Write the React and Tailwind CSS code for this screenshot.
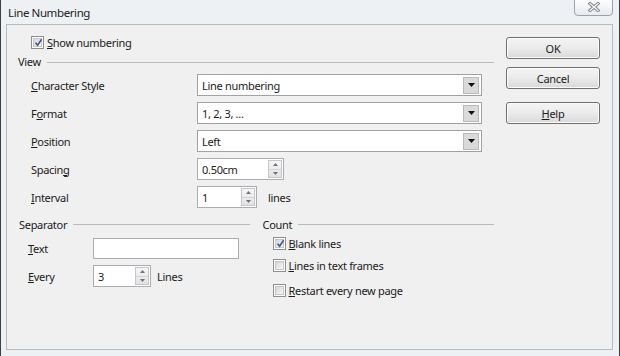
import React from 'react'

function Check({ checked }) {
  return (
    <span className="relative w-[13px] h-[13px] shrink-0 border border-[#8e8f8f] bg-white p-px flex">
      <span className="flex-1 border border-[#c6c6c6] bg-gradient-to-br from-[#d6d6d6] to-[#f7f7f7]" />
      {checked && (
        <svg className="absolute left-[2px] top-[1px]" width="9" height="9" viewBox="0 0 9 9">
          <path d="M1.5 4.8 L3.6 7.2 L7.6 1.2" fill="none" stroke="#3f5a93" strokeWidth="1.7" />
        </svg>
      )}
    </span>
  )
}

function Spinner() {
  return (
    <span className="w-[14px] h-[18px] shrink-0 border border-[#c4c6c9] bg-gradient-to-b from-[#f6f6f6] to-[#e2e2e2] flex flex-col">
      <span className="flex-1 flex items-center justify-center border-b border-[#d4d4d4]">
        <svg width="5" height="3" viewBox="0 0 5 3"><path d="M0 3 L2.5 0 L5 3 Z" fill="#6f7378" /></svg>
      </span>
      <span className="flex-1 flex items-center justify-center">
        <svg width="5" height="3" viewBox="0 0 5 3"><path d="M0 0 L2.5 3 L5 0 Z" fill="#6f7378" /></svg>
      </span>
    </span>
  )
}

function SpinBox({ value, className }) {
  return (
    <div className={`h-[22px] bg-white border border-[#abadb3] flex items-center pl-[4px] pr-px ${className}`}>
      <span className="flex-1">{value}</span>
      <Spinner />
    </div>
  )
}

function Select({ value }) {
  return (
    <div className="w-[285px] h-[22px] bg-white border border-[#a2a2a2] flex items-center pl-[4px] pr-[2px]">
      <span className="flex-1">{value}</span>
      <span className="w-[16px] h-[17px] bg-[#dadada] border border-[#b9b9b9] flex items-center justify-center">
        <svg width="7" height="4" viewBox="0 0 7 4"><path d="M0 0 L7 0 L3.5 4 Z" fill="#111" /></svg>
      </span>
    </div>
  )
}

function GroupTitle({ children, className }) {
  return (
    <div className={`flex items-center ${className}`}>
      <span>{children}</span>
      <span className="flex-1 h-px bg-[#b9bcbf] ml-[6px] mt-px" />
    </div>
  )
}

function Button({ children, className }) {
  return (
    <button className={`w-[94px] h-[22px] rounded-[3px] border border-[#707070] bg-gradient-to-b from-[#f4f4f4] via-[#ebebeb] to-[#d9d9d9] shadow-[inset_0_0_0_1px_#fcfcfc] flex items-center justify-center ${className}`}>
      {children}
    </button>
  )
}

const rows = [
  { label: <><u>C</u>haracter Style</>, field: <Select value="Line numbering" /> },
  { label: <>F<u>o</u>rmat</>, field: <Select value="1, 2, 3, ..." /> },
  { label: <><u>P</u>osition</>, field: <Select value="Left" /> },
  { label: <>Spacin<u>g</u></>, field: <SpinBox value="0.50cm" className="w-[87px]" /> },
  {
    label: <><u>I</u>nterval</>,
    field: (
      <div className="flex items-center">
        <SpinBox value="1" className="w-[60px]" />
        <span className="ml-[11px]">lines</span>
      </div>
    ),
  },
]

export default function App() {
  return (
    <div className="w-[620px] h-[356px] overflow-hidden bg-[#eef1f4] border-x border-[#3b3f44] flex flex-col font-['Noto_Sans',sans-serif] text-[11px] tracking-[-0.3px] text-[#1b1b1b] leading-none">
      <div className="h-[24px] flex items-start shrink-0">
        <span className="pl-[7px] pt-[7px] text-[11.5px] tracking-[-0.4px] text-[#222]">Line Numbering</span>
        <span className="ml-auto mr-[6px] -mt-[2px] w-[39px] h-[18px] rounded-b-[4px] border border-[#9aa3ad] bg-gradient-to-b from-[#ffffff] to-[#e7ebef] flex items-center justify-center">
          <svg width="12" height="10" viewBox="0 0 12 10">
            <path d="M2 1.5 L10 8.5 M10 1.5 L2 8.5" stroke="#7d848c" strokeWidth="3.2" strokeLinecap="square" />
            <path d="M2 1.5 L10 8.5 M10 1.5 L2 8.5" stroke="#f7f7f7" strokeWidth="1.3" strokeLinecap="square" />
          </svg>
        </span>
      </div>

      <div className="ml-[5px] mr-[6px] h-[326px] shrink-0 bg-[#f0f0f0] border border-[#b7bcc1] flex">
        <div className="w-[487px] pl-[11px] flex flex-col">
          <div className="h-[20px] mt-[7px] flex items-center">
            <span className="ml-[13px]"><Check checked /></span>
            <span className="ml-[3px]"><u>S</u>how numbering</span>
          </div>
          <GroupTitle className="h-[19px]">View</GroupTitle>
          {rows.map((r, i) => (
            <div key={i} className="h-[28px] flex items-center">
              <span className="w-[179px] pl-[13px]">{r.label}</span>
              {r.field}
            </div>
          ))}

          <div className="mt-[4px] flex">
            <div className="w-[232px] flex flex-col">
              <GroupTitle className="h-[18px] pl-px">Separator</GroupTitle>
              <div className="h-[28px] mt-[1px] flex items-center">
                <span className="w-[75px] pl-[10px]"><u>T</u>ext</span>
                <div className="w-[146px] h-[21px] bg-white border border-[#abadb3]" />
              </div>
              <div className="h-[28px] flex items-center">
                <span className="w-[75px] pl-[10px]"><u>E</u>very</span>
                <SpinBox value="3" className="w-[58px]" />
                <span className="ml-[6px]">Lines</span>
              </div>
            </div>
            <div className="ml-[13px] w-[232px] flex flex-col">
              <GroupTitle className="h-[18px]">Count</GroupTitle>
              <div className="h-[20px] flex items-center pl-[10px]">
                <Check checked />
                <span className="ml-[3px]"><u>B</u>lank lines</span>
              </div>
              <div className="h-[25px] flex items-center pl-[10px]">
                <Check />
                <span className="ml-[3px]"><u>L</u>ines in text frames</span>
              </div>
              <div className="h-[24px] flex items-center pl-[10px]">
                <Check />
                <span className="ml-[3px]"><u>R</u>estart every new page</span>
              </div>
            </div>
          </div>
        </div>

        <div className="ml-[12px] pt-[12px] flex flex-col">
          <Button>OK</Button>
          <Button className="mt-[8px]">Cancel</Button>
          <Button className="mt-[13px]"><span><u>H</u>elp</span></Button>
        </div>
      </div>
    </div>
  )
}
